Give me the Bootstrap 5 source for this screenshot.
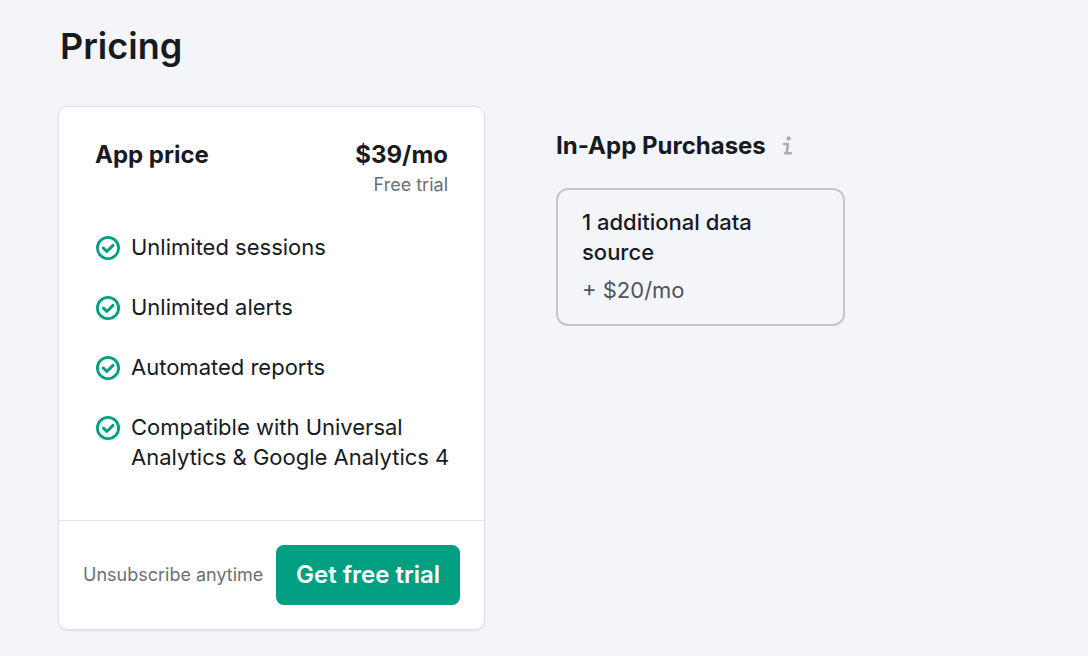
<!DOCTYPE html>
<html lang="en">
<head>
<meta charset="utf-8">
<meta name="viewport" content="width=device-width, initial-scale=1">
<title>Pricing</title>
<link href="https://cdn.jsdelivr.net/npm/bootstrap@5.3.0/dist/css/bootstrap.min.css" rel="stylesheet">
<style>
body{background:#f4f5f9;color:#171a22;font-family:Inter,"Liberation Sans",sans-serif;font-size:22px;line-height:30px}
.page{padding:22px 58px 26px}
h1{font-size:36px;line-height:48px;font-weight:600;margin:0 0 36px 2px}
h2{font-size:24px;line-height:32px;font-weight:700;margin:0}
.plans{gap:71px}
.plan{width:427px;max-width:100%;border:1px solid #e0e1e9;border-radius:10px;box-shadow:0 1px 2px rgba(25,27,35,.1);background:#fff;color:inherit}
.plan-main{padding:32px 36px 48px}
.price{font-size:24px;line-height:32px;font-weight:700}
.hint{font-size:18px;line-height:28px;color:#6c6e79}
.features{margin:33px 0 0;gap:30px}
.features li{gap:10px}
.features svg{margin-top:3px}
.plan-foot{border-top:1px solid #e0e1e9;padding:24px}
.btn-trial{background:#009f81;color:#fff;font-size:24px;line-height:32px;font-weight:600;padding:14px 20px;border:0;border-radius:8px;white-space:nowrap}
.btn-trial:hover{background:#007c65;color:#fff}
.extras{width:289px;padding-top:24px}
.option{border:2px solid #c4c7cf;border-radius:12px;padding:17px 24px 19px;margin-top:26px}
.option-price{color:#50535c}
</style>
<script defer src="https://cdn.jsdelivr.net/npm/bootstrap@5.3.0/dist/js/bootstrap.bundle.min.js"></script>
</head>
<body>
<svg class="d-none"><symbol id="check" viewBox="-1 -1 26 26"><circle cx="12" cy="12" r="10.6" fill="none" stroke="#009f81" stroke-width="2.8"/><path d="M7.3 12l3.5 3.5 6.2-6.1" fill="none" stroke="#009f81" stroke-width="2.9" stroke-linecap="round" stroke-linejoin="round"/></symbol></svg>
<main class="page">
<h1>Pricing</h1>
<div class="plans d-flex flex-wrap align-items-start">
<section class="plan card">
<div class="plan-main">
<div class="d-flex justify-content-between"><h2>App price</h2><div class="text-end"><div class="price">$39/mo</div><div class="hint">Free trial</div></div></div>
<ul class="features list-unstyled d-flex flex-column">
<li class="d-flex"><svg class="flex-shrink-0" width="26" height="26" aria-hidden="true"><use href="#check"/></svg><span>Unlimited sessions</span></li>
<li class="d-flex"><svg class="flex-shrink-0" width="26" height="26" aria-hidden="true"><use href="#check"/></svg><span>Unlimited alerts</span></li>
<li class="d-flex"><svg class="flex-shrink-0" width="26" height="26" aria-hidden="true"><use href="#check"/></svg><span>Automated reports</span></li>
<li class="d-flex"><svg class="flex-shrink-0" width="26" height="26" aria-hidden="true"><use href="#check"/></svg><span class="text-nowrap">Compatible with Universal<br>Analytics &amp; Google Analytics 4</span></li>
</ul>
</div>
<div class="plan-foot d-flex align-items-center justify-content-between"><span class="hint text-nowrap">Unsubscribe anytime</span><button type="button" class="btn btn-trial">Get free trial</button></div>
</section>
<section class="extras">
<div class="d-flex align-items-center gap-3"><h2 class="text-nowrap">In-App Purchases</h2><svg width="11" height="20" viewBox="0 0 11 20" role="img" aria-label="Information"><circle cx="6.6" cy="2.4" r="2.2" fill="#a9abb6"/><path d="M2 8h4L4.7 17M3.2 17.2H8.8" fill="none" stroke="#a9abb6" stroke-width="2.5" stroke-linecap="round" stroke-linejoin="round"/></svg></div>
<div class="option"><div class="fw-medium">1 additional data source</div><div class="option-price mt-2">+ $20/mo</div></div>
</section>
</div>
</main>
</body>
</html>
